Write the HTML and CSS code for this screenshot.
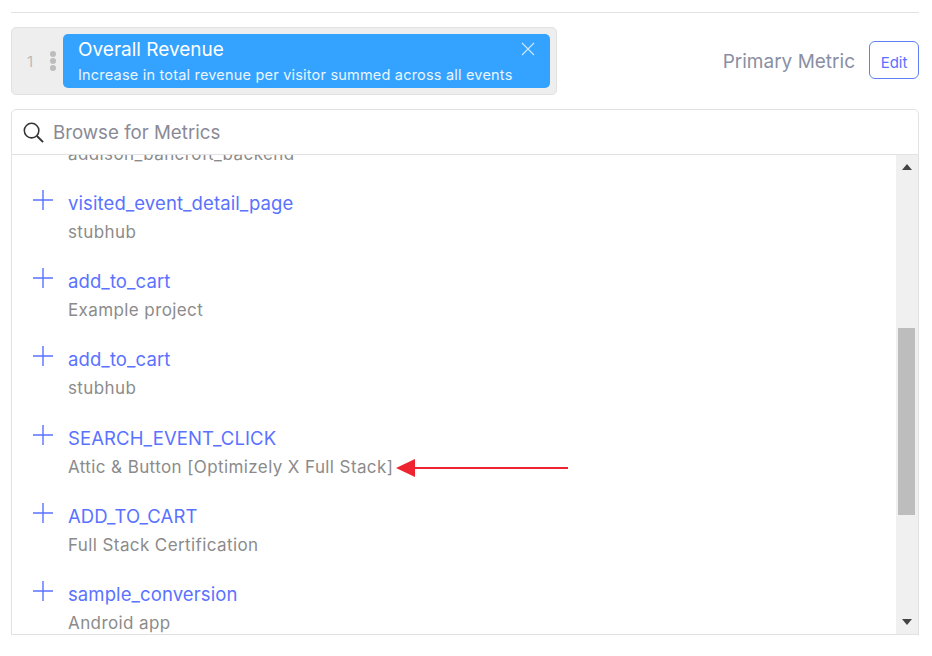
FILE: index.html
```html
<!DOCTYPE html>
<html lang="en">
<head>
<meta charset="utf-8">
<title>Metrics</title>
<link rel="stylesheet" href="styles.css">
</head>
<body>
<div class="page">
  <hr class="divider">
  <div class="metric-row">
    <div class="metric-box">
      <span class="rank">1</span>
      <span class="grip"><i></i><i></i><i></i></span>
      <div class="metric-card">
        <div class="metric-title">Overall Revenue</div>
        <div class="metric-desc">Increase in total revenue per visitor summed across all events</div>
        <svg class="close" viewBox="0 0 14 14" width="14" height="14"><path d="M1 1l12 12M13 1L1 13" stroke="#cfe8ff" stroke-width="1.1" fill="none"/></svg>
      </div>
    </div>
    <div class="primary">
      <span class="primary-label">Primary Metric</span>
      <button class="edit">Edit</button>
    </div>
  </div>
  <div class="search">
    <svg class="search-icon" viewBox="0 0 24 24" width="23" height="23"><circle cx="10" cy="10" r="7.6" stroke="#333" stroke-width="1.6" fill="none"/><path d="M15.6 15.6L22 22" stroke="#333" stroke-width="2" fill="none"/></svg>
    <span class="search-text">Browse for Metrics</span>
  </div>
  <div class="list">
    <div class="rows">
      <div class="row-clipped"><div class="sub">addison_bancroft_backend</div></div>
      <div class="row"><svg class="plus" viewBox="0 0 20 20" width="20" height="20"><path d="M10 0v20M0 10h20" stroke="#5a72ff" stroke-width="1.4"/></svg><div><div class="name">visited_event_detail_page</div><div class="sub">stubhub</div></div></div>
      <div class="row"><svg class="plus" viewBox="0 0 20 20" width="20" height="20"><path d="M10 0v20M0 10h20" stroke="#5a72ff" stroke-width="1.4"/></svg><div><div class="name">add_to_cart</div><div class="sub">Example project</div></div></div>
      <div class="row"><svg class="plus" viewBox="0 0 20 20" width="20" height="20"><path d="M10 0v20M0 10h20" stroke="#5a72ff" stroke-width="1.4"/></svg><div><div class="name">add_to_cart</div><div class="sub">stubhub</div></div></div>
      <div class="row"><svg class="plus" viewBox="0 0 20 20" width="20" height="20"><path d="M10 0v20M0 10h20" stroke="#5a72ff" stroke-width="1.4"/></svg><div><div class="name">SEARCH_EVENT_CLICK</div><div class="sub">Attic &amp; Button [Optimizely X Full Stack]</div></div></div>
      <div class="row"><svg class="plus" viewBox="0 0 20 20" width="20" height="20"><path d="M10 0v20M0 10h20" stroke="#5a72ff" stroke-width="1.4"/></svg><div><div class="name">ADD_TO_CART</div><div class="sub">Full Stack Certification</div></div></div>
      <div class="row"><svg class="plus" viewBox="0 0 20 20" width="20" height="20"><path d="M10 0v20M0 10h20" stroke="#5a72ff" stroke-width="1.4"/></svg><div><div class="name">sample_conversion</div><div class="sub">Android app</div></div></div>
    </div>
    <div class="scrollbar">
      <svg class="arrow-up" viewBox="0 0 10 6" width="10" height="6"><path d="M5 0l5 6H0z" fill="#444"/></svg>
      <div class="thumb"></div>
      <svg class="arrow-down" viewBox="0 0 10 6" width="10" height="6"><path d="M0 0h10L5 6z" fill="#444"/></svg>
    </div>
  </div>
  <svg class="annotation" viewBox="0 0 174 20" width="174" height="20"><path d="M172 9v2H19v-2z" fill="#ee2430"/><path d="M0 10l19-9v18z" fill="#ee2430"/></svg>
</div>
</body>
</html>
```
FILE: styles.css
```css
* { box-sizing: border-box; }
html, body { margin: 0; padding: 0; background: #fff; }
body { font-family: Inter, "Open Sans", sans-serif; height: 656px; overflow: hidden; }
.page { position: relative; padding: 12px 13px 0 11px; }
.divider { height: 1px; margin: 0; border: 0; background: #e3e3e3; }
.metric-row { display: flex; align-items: center; justify-content: space-between; margin-top: 14px; }
.metric-box {
  display: flex; align-items: center; width: 546px; height: 68px;
  padding: 0 6px 0 0; background: #eeeeee; border: 1px solid #e2e2e2; border-radius: 5px;
}
.rank { width: 14px; margin-left: 15px; font-size: 15px; color: #bbb; }
.grip { display: flex; flex-direction: column; gap: 1px; width: 22px; padding-left: 9px; }
.grip i { width: 6px; height: 6px; border-radius: 50%; background: #bdbdbd; }
.metric-card {
  position: relative; flex: 1; height: 54px; padding: 5px 15px;
  background: #33a3ff; border-radius: 5px; color: #fff;
}
.metric-title { font-size: 19px; line-height: 22px; }
.metric-desc { margin-top: 5px; font-size: 14.5px; letter-spacing: 0.2px; line-height: 18px; white-space: nowrap; color: #eaf5ff; }
.close { position: absolute; top: 8px; right: 15px; }
.primary { display: flex; align-items: center; gap: 14px; margin-bottom: 2px; }
.primary-label { padding-top: 2px; font-size: 19px; color: #8a8fa3; }
.edit {
  width: 50px; height: 38px; padding: 4px 0 0; background: #fff; border: 1.5px solid #5f80f5;
  border-radius: 6px; color: #5a72ff; font: 15px Inter, sans-serif;
}
.search {
  display: flex; align-items: center; height: 46px; margin-top: 14px; padding-left: 10px;
  border: 1px solid #e2e2e2; border-radius: 5px 5px 0 0; background: #fff;
}
.search-icon { flex: none; width: 23px; height: 23px; }
.search-text { margin-left: 8px; font-size: 18.7px; color: #8a8a96; }
.list {
  position: relative; height: 480px; overflow: hidden;
  border: 1px solid #e2e2e2; border-top: 0; background: #fff;
}
.rows { margin-top: -13px; padding-left: 21px; }
.row-clipped { height: 48px; padding-left: 35px; }
.row { display: flex; gap: 15px; height: 78.2px; }
.plus { flex: none; width: 20px; height: 20px; }
.name { margin-top: 1px; font-size: 18.5px; letter-spacing: 0.1px; line-height: 24px; color: #5a72ff; white-space: nowrap; }
.sub { margin-top: 5px; font-size: 17px; letter-spacing: 0.4px; line-height: 24px; color: #8b8b8b; white-space: nowrap; }
.row-clipped .sub { margin-top: 0; }
.scrollbar {
  position: absolute; top: 0; right: 0; bottom: 0; width: 22px; background: #f0f0f0;
}
.thumb { position: absolute; top: 173px; left: 2px; width: 17px; height: 187px; background: #bdbdbd; }
.arrow-up { position: absolute; top: 9px; left: 6px; }
.arrow-down { position: absolute; bottom: 9px; left: 6px; }
.annotation { position: absolute; left: 396px; top: 457.5px; }
```
